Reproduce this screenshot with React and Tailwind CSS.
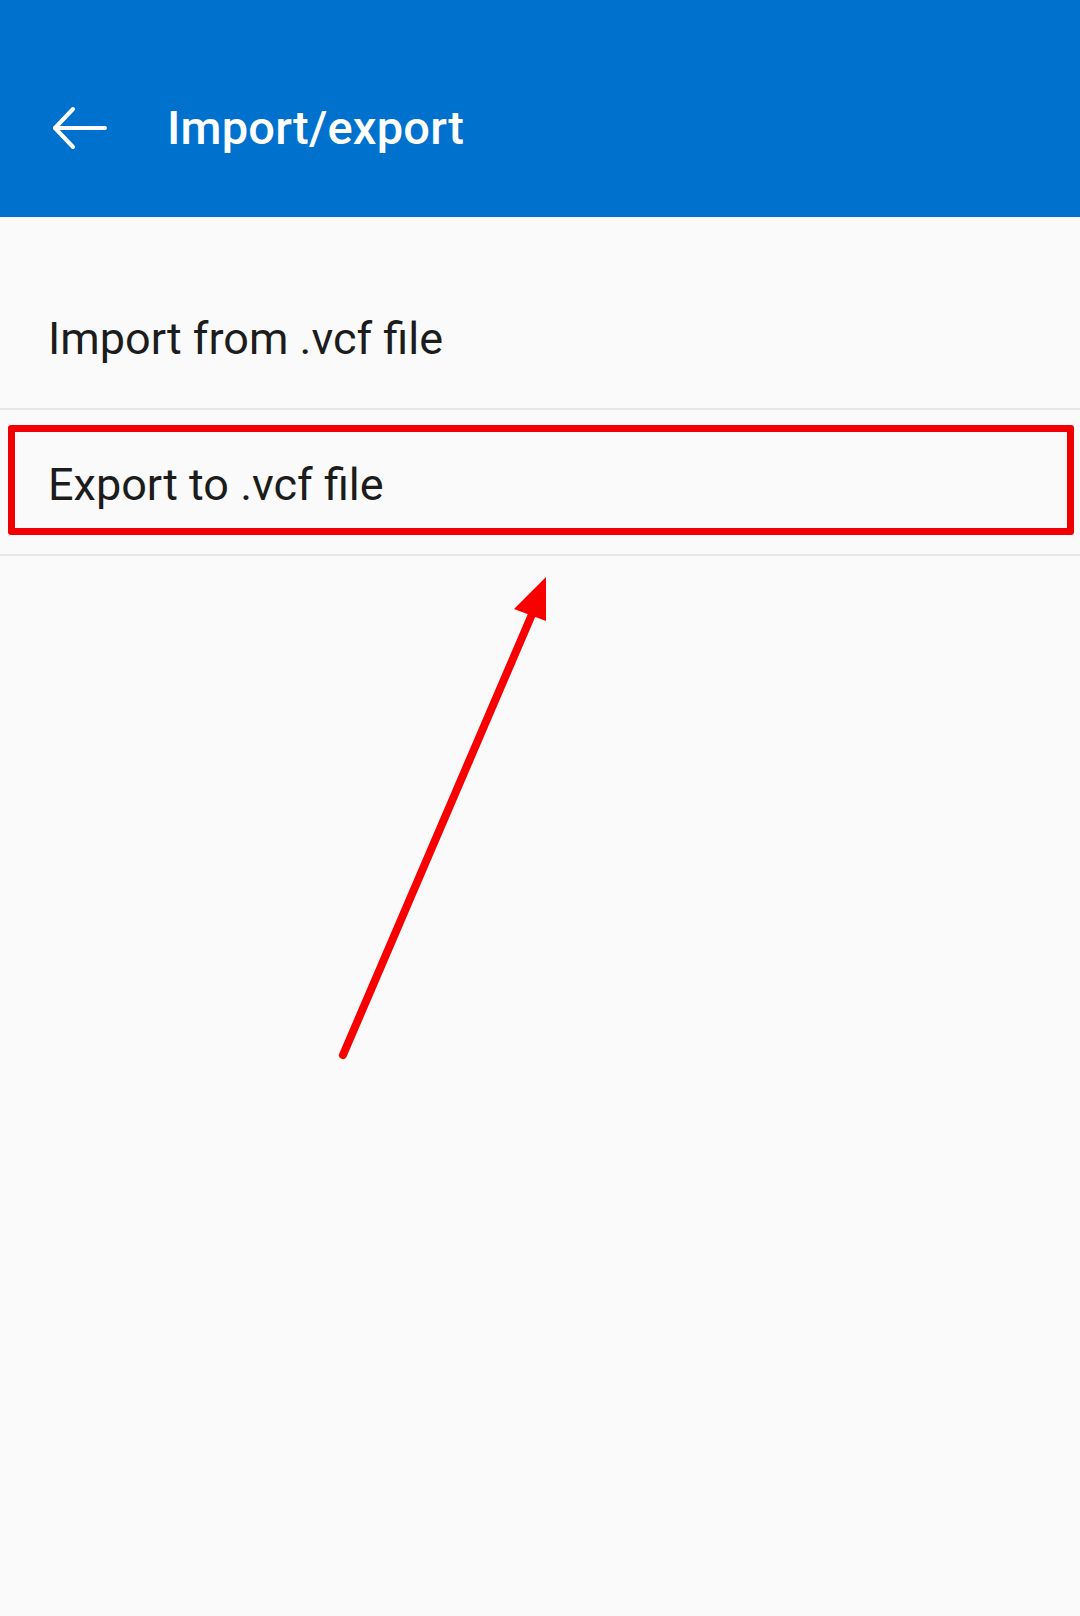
function BackArrow() {
    return (
        <svg width="56" height="44" viewBox="0 0 56 44" fill="none" stroke="white" strokeWidth="4" strokeLinecap="round" strokeLinejoin="round">
            <path d="M3 22 H53" />
            <path d="M21 3 L3 22 L21 41" />
        </svg>
    );
}

function ListRow({ label }) {
    return (
        <div className="h-[146px] flex items-center pl-[48px] pt-[6px] text-[45px] text-[#1c1c1c] border-b-2 border-[#e6e6e6]">
            {label}
        </div>
    );
}

export default function App() {
    return (
        <div className="relative w-[1080px] h-[1616px] bg-[#fafafa] overflow-hidden" style={{ fontFamily: "Roboto, 'Noto Sans', sans-serif" }}>
            <div className="h-[217px] bg-[#0072ce] flex items-center">
                <div className="ml-[52px] mt-[38px]">
                    <BackArrow />
                </div>
                <div className="ml-[59px] mt-[40px] text-white text-[47px] font-medium tracking-[0.2px]">
                    Import/export
                </div>
            </div>

            <div className="pt-[47px]">
                <ListRow label="Import from .vcf file" />
                <ListRow label="Export to .vcf file" />
            </div>

            {/* annotation: highlight box */}
            <div className="absolute left-[8px] top-[425px] w-[1066px] h-[110px] border-[7px] border-[#f00000] rounded-[3px]" />

            {/* annotation: arrow */}
            <svg className="absolute left-0 top-0" width="1080" height="1616" viewBox="0 0 1080 1616">
                <path d="M343 1055 L533 612" stroke="#f80000" strokeWidth="8" strokeLinecap="round" fill="none" />
                <polygon points="546,577 546,621 514,609" fill="#f80000" />
            </svg>
        </div>
    );
}
